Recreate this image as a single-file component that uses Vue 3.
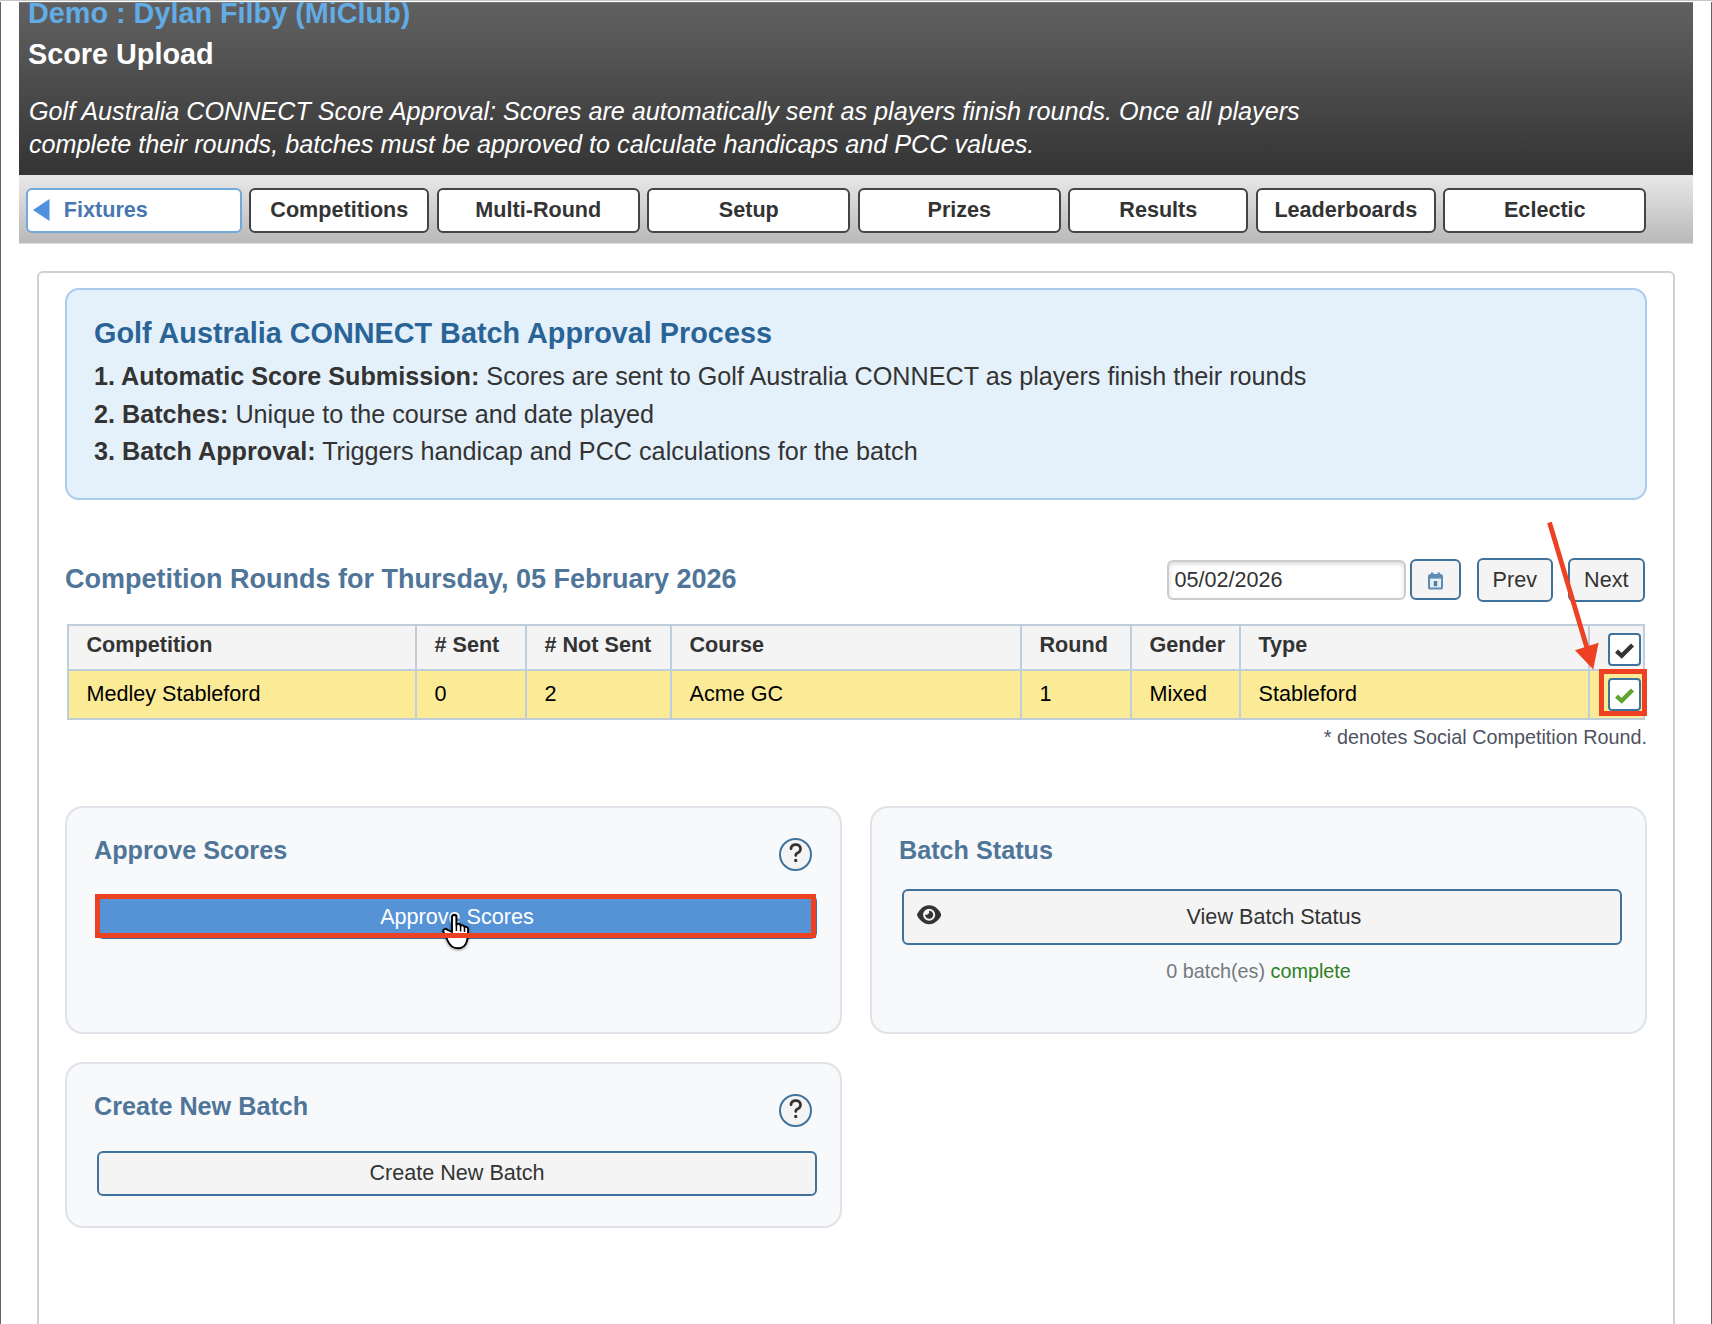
<script setup>
const tabs = [
  { label: 'Fixtures', width: 216, back: true },
  { label: 'Competitions', width: 180 },
  { label: 'Multi-Round', width: 203 },
  { label: 'Setup', width: 203 },
  { label: 'Prizes', width: 203 },
  { label: 'Results', width: 180 },
  { label: 'Leaderboards', width: 180 },
  { label: 'Eclectic', width: 203 },
]

const steps = [
  { title: '1. Automatic Score Submission:', text: 'Scores are sent to Golf Australia CONNECT as players finish their rounds' },
  { title: '2. Batches:', text: 'Unique to the course and date played' },
  { title: '3. Batch Approval:', text: 'Triggers handicap and PCC calculations for the batch' },
]

const columns = ['Competition', '# Sent', '# Not Sent', 'Course', 'Round', 'Gender', 'Type']
const round = ['Medley Stableford', '0', '2', 'Acme GC', '1', 'Mixed', 'Stableford']
</script>

<template>
  <div class="page">
    <header class="masthead">
      <div class="title club">Demo : Dylan Filby (MiClub)</div>
      <div class="title">Score Upload</div>
      <p class="intro">
        Golf Australia CONNECT Score Approval: Scores are automatically sent as players finish rounds. Once all players<br />
        complete their rounds, batches must be approved to calculate handicaps and PCC values.
      </p>
    </header>

    <nav class="tabs">
      <a v-for="t in tabs" :key="t.label" class="tab" :class="{ back: t.back }" :style="{ width: t.width + 'px' }">
        <svg v-if="t.back" class="tri" width="17" height="22" viewBox="0 0 17 22"><path d="M0 11 16.5 0v22z" fill="#4f90df" /></svg>
        {{ t.label }}
      </a>
    </nav>

    <main class="panel">
      <section class="info">
        <h2>Golf Australia CONNECT Batch Approval Process</h2>
        <p v-for="s in steps" :key="s.title"><b>{{ s.title }}</b> {{ s.text }}</p>
      </section>

      <div class="toolbar">
        <h3>Competition Rounds for Thursday, 05 February 2026</h3>
        <div class="date">05/02/2026</div>
        <button class="btn cal" aria-label="Calendar">
          <svg width="15" height="18" viewBox="0 0 15 18">
            <rect x="1" y="3" width="13" height="13.600" rx="1.600" fill="#e6edf4" stroke="#5f8bb3" stroke-width="2" />
            <path d="M1 3h13v3.600H1z" fill="#5f8bb3" />
            <path d="M3 .4h2.400v3H3zM9.600 .4H12v3H9.600z" fill="#5f8bb3" />
            <path d="M5.800 9h3.400v5.200H5.800z" fill="#4f7dab" />
          </svg>
        </button>
        <button class="btn prev">Prev</button>
        <button class="btn next">Next</button>
      </div>

      <div class="grid">
        <div v-for="c in columns" :key="c" class="cell head">{{ c }}</div>
        <div class="cell head tick">
          <span class="check"><svg width="21" height="17" viewBox="0 0 21 17"><path d="M2.500 9.200 7.700 13.800 18.500 3" fill="none" stroke="#333" stroke-width="4.300" /></svg></span>
        </div>
        <div v-for="(v, i) in round" :key="i" class="cell">{{ v }}</div>
        <div class="cell tick">
          <span class="check">
            <svg width="21" height="17" viewBox="0 0 21 17"><path d="M2.500 9.200 7.700 13.800 18.500 3" fill="none" stroke="#5fa22f" stroke-width="4.300" /></svg>
          </span>
        </div>
      </div>
      <div class="footnote">* denotes Social Competition Round.</div>

      <div class="cards">
        <section class="card">
          <div class="card-head">
            <h4>Approve Scores</h4>
            <span class="help"><svg width="13.500" height="21.600" viewBox="0 0 320 512"><path fill="#333" d="M80 160c0-35.300 28.700-64 64-64h32c35.300 0 64 28.700 64 64v3.600c0 21.800-11.100 42.100-29.400 53.800l-42.200 27.100c-25.200 16.200-40.400 44.100-40.400 74V320c0 17.700 14.300 32 32 32s32-14.300 32-32v-1.400c0-8.200 4.200-15.800 11-20.200l42.200-27.100c36.600-23.600 58.800-64.100 58.800-107.700V160c0-70.700-57.300-128-128-128H144C73.300 32 16 89.300 16 160c0 17.700 14.300 32 32 32s32-14.300 32-32zm80 320a40 40 0 1 0 0-80 40 40 0 1 0 0 80z" /></svg></span>
          </div>
          <button class="btn wide primary">Approve Scores</button>
        </section>

        <section class="card">
          <div class="card-head"><h4>Batch Status</h4></div>
          <button class="btn wide view">
            <svg class="eye" width="24.300" height="21.600" viewBox="0 0 576 512"><path fill="#333" d="M288 32c-80.800 0-145.500 36.800-192.600 80.600C48.600 156 17.300 208 2.500 243.700c-3.300 7.900-3.300 16.700 0 24.600C17.300 304 48.600 356 95.400 399.400C142.500 443.200 207.200 480 288 480s145.500-36.800 192.600-80.600c46.800-43.500 78.100-95.400 93-131.100c3.300-7.900 3.300-16.700 0-24.600c-14.900-35.700-46.200-87.700-93-131.100C433.500 68.800 368.800 32 288 32zM144 256a144 144 0 1 1 288 0 144 144 0 1 1 -288 0zm144-64c0 35.300-28.700 64-64 64c-7.100 0-13.900-1.200-20.300-3.300c-5.500-1.800-11.900 1.600-11.700 7.400c.3 6.900 1.300 13.800 3.200 20.700c13.700 51.200 66.400 81.600 117.600 67.900s81.600-66.400 67.900-117.600c-11.100-41.500-47.800-69.400-88.600-71.100c-5.800-.2-9.200 6.100-7.400 11.700c2.100 6.400 3.300 13.200 3.300 20.300z" /></svg>
            View Batch Status
          </button>
          <div class="count">0 batch(es) <span>complete</span></div>
        </section>

        <section class="card">
          <div class="card-head">
            <h4>Create New Batch</h4>
            <span class="help"><svg width="13.500" height="21.600" viewBox="0 0 320 512"><path fill="#333" d="M80 160c0-35.300 28.700-64 64-64h32c35.300 0 64 28.700 64 64v3.600c0 21.800-11.100 42.100-29.400 53.800l-42.200 27.100c-25.200 16.200-40.400 44.100-40.400 74V320c0 17.700 14.300 32 32 32s32-14.300 32-32v-1.400c0-8.200 4.200-15.800 11-20.200l42.200-27.100c36.600-23.600 58.800-64.100 58.800-107.700V160c0-70.700-57.300-128-128-128H144C73.300 32 16 89.300 16 160c0 17.700 14.300 32 32 32s32-14.300 32-32zm80 320a40 40 0 1 0 0-80 40 40 0 1 0 0 80z" /></svg></span>
          </div>
          <button class="btn wide">Create New Batch</button>
        </section>
      </div>
    </main>

    <!-- mouse pointer and red callouts over the page -->
    <svg class="overlay" width="1712" height="1324" viewBox="0 0 1712 1324">
      <g class="pointer" transform="translate(430 905)">
        <path
          d="M22 27V12.300c0-3.100 4.400-3.100 4.400 0V20c.8-2 4-1.600 4.200.9 1.200-1.300 3.700-.7 3.900 1.300 1.300-1 3.600-.2 3.600 2.100 0 4.500-.1 8.900-1.400 12.400-1.300 3.800-4.400 6.500-8.600 6.500-5.500 0-8.700-3-10.500-7.700-1.100-3-2.500-5.700-4-8.300-1.500-2.700 1.900-4.500 4.100-2.200z"
          fill="#fff" stroke="#000" stroke-width="1.900" stroke-linejoin="round"
        />
        <path d="M26.400 20v6M30.600 21v5.500M34.500 22.500v4.500" fill="none" stroke="#000" stroke-width="1.500" />
      </g>
      <g fill="none" stroke="#ee4023">
        <rect x="97.500" y="896.500" width="716" height="39" stroke-width="5" />
        <rect x="1601.500" y="671.500" width="43" height="42" stroke-width="5" />
        <path d="M1549.500 522.500 1587 648" stroke-width="4.800" />
      </g>
      <path d="M1575 650.200 1598.600 642.700 1593.200 669.500z" fill="#ee4023" />
    </svg>
  </div>
</template>

<style>
body {
  margin: 0;
  background: #fff;
}
</style>

<style scoped>
* {
  box-sizing: border-box;
}
.page {
  position: relative;
  width: 1712px;
  height: 1324px;
  overflow: hidden;
  background: #fff;
  border-top: 1px solid #c6c6c6;
  padding-top: 1px;
  font-family: 'Liberation Sans', Arial, sans-serif;
  font-size: 21.6px;
  color: #333;
}
.page::before {
  content: '';
  position: absolute;
  inset: 1px 0 0 0;
  border: solid #666;
  border-width: 0 1px;
  pointer-events: none;
}
h2, h3, h4, p {
  margin: 0;
}
.masthead {
  width: 1674px;
  height: 173px;
  margin-left: 19px;
  padding-left: 9px;
  overflow: hidden;
  background: linear-gradient(#606060, #5b5b5b 15%, #363636 95%);
  box-shadow: inset 0 1px #777;
}
.title {
  font-size: 28.8px;
  line-height: 41px;
  font-weight: bold;
  color: #fff;
  white-space: nowrap;
}
.club {
  margin-top: -9px;
  color: #62ace6;
}
.intro {
  margin: 20px 0 0 1px;
  font-size: 25.2px;
  line-height: 32.6px;
  font-style: italic;
  color: #fff;
  white-space: nowrap;
}
.tabs {
  display: flex;
  gap: 7.5px;
  width: 1674px;
  height: 69px;
  margin-left: 19px;
  padding: 13px 0 0 6.8px;
  background: linear-gradient(#e8e8e8, #b9b9b9);
  border-bottom: 1px solid #dcdcdc;
}
.tab {
  display: flex;
  flex: none;
  align-items: center;
  justify-content: center;
  height: 44.5px;
  border: 2px solid #444;
  border-radius: 6px;
  background: #fff;
  font-weight: bold;
}
.tab.back {
  justify-content: flex-start;
  padding-left: 5px;
  gap: 14px;
  border-color: #72a9dc;
  color: #4777b2;
}
.panel {
  width: 1638px;
  height: 1100px;
  margin: 26.5px 0 0 37px;
  padding: 15px 26px 0;
  border: 2px solid #d0d0d0;
  border-radius: 6px;
}
.info {
  height: 212px;
  padding: 25px 0 0 27px;
  border: 2px solid #a8cbee;
  border-radius: 14px;
  background: #e4f1fb;
}
.info h2 {
  margin-bottom: 6.5px;
  font-size: 28.8px;
  line-height: 37px;
  color: #2a6496;
}
.info p {
  font-size: 25.2px;
  line-height: 37.7px;
}
.toolbar {
  display: flex;
  align-items: center;
  height: 44.5px;
  margin-top: 58px;
  padding-right: 2px;
}
.toolbar h3 {
  flex: 1;
  font-size: 27px;
  color: #4f7599;
  white-space: nowrap;
}
.date {
  width: 239px;
  height: 40px;
  padding-left: 5.5px;
  border: 2px solid #ccc;
  border-radius: 6px;
  box-shadow: inset 0 2px 4px rgba(0, 0, 0, 0.16);
  line-height: 36px;
}
.btn {
  display: flex;
  align-items: center;
  justify-content: center;
  height: 44.5px;
  padding: 0;
  border: 2px solid #3f739d;
  border-radius: 6px;
  background: #f4f4f4;
  font: inherit;
  color: #333;
}
.btn.cal {
  width: 51px;
  height: 41px;
  margin: 0 15.5px 0 4px;
}
.btn.cal svg {
  margin-top: 2px;
}
.btn.prev {
  width: 76.5px;
  margin-right: 14.5px;
}
.btn.next {
  width: 77.5px;
}
.grid {
  display: grid;
  grid-template-columns: 348px 110px 145px 350px 110px 109px 349px 55px;
  grid-template-rows: 45px 49px;
  width: 1578px;
  margin: 21.5px 0 0 2px;
  border: solid #c0cedb;
  border-width: 2px 0 0 2px;
}
.cell {
  display: flex;
  align-items: center;
  padding-left: 17.5px;
  border: solid #c0cedb;
  border-width: 0 2px 2px 0;
  background: #fbeb97;
  color: #000;
  white-space: nowrap;
}
.cell.head {
  padding-bottom: 4px;
  background: #f4f4f4;
  color: #333;
  font-weight: bold;
}
.cell.tick.head {
  padding: 4px 0 0 17.5px;
}
.check {
  display: flex;
  flex: none;
  align-items: center;
  justify-content: center;
  width: 33px;
  height: 33px;
  padding-top: 3px;
  border: 2px solid #3f739d;
  border-radius: 4px;
  background: #fff;
}
.footnote {
  margin: 5px 0 0;
  font-size: 19.8px;
  line-height: 24px;
  text-align: right;
  color: #4e5260;
}
.cards {
  display: grid;
  grid-template-columns: 777px 777px;
  grid-template-rows: 228.5px 166.5px;
  gap: 27.5px 28px;
  margin-top: 57px;
}
.card {
  padding: 24.5px 0 0 27px;
  border: 2px solid #dfe3e7;
  border-radius: 18px;
  background: #f7f9fb;
}
.card-head {
  display: flex;
  justify-content: space-between;
  height: 36px;
  padding-right: 28px;
}
.card h4 {
  font-size: 25.2px;
  line-height: 36px;
  color: #4f7599;
}
.help {
  display: flex;
  justify-content: center;
  width: 33px;
  height: 33px;
  margin-top: 6px;
  padding-top: 2px;
  border: 2px solid #3f739d;
  border-radius: 50%;
  background: #f4f4f4;
}
.btn.wide {
  width: 720px;
  margin: 27px 0 0 3px;
}
.btn.primary {
  height: 43.5px;
  background: #5592d6;
  color: #fff;
}
.btn.view {
  position: relative;
  height: 56px;
  margin-top: 20.5px;
  padding-left: 24px;
}
.eye {
  position: absolute;
  left: 12.5px;
  top: 13.5px;
}
.count {
  margin: 14.7px 27px 0 0;
  font-size: 19.8px;
  line-height: 24px;
  text-align: center;
  color: #75797f;
}
.count span {
  color: #2f8022;
}
.overlay {
  position: absolute;
  left: 0;
  top: -1px;
  pointer-events: none;
}
.pointer {
  filter: drop-shadow(0 1.5px 1.5px rgba(0, 0, 0, 0.4));
}
</style>
